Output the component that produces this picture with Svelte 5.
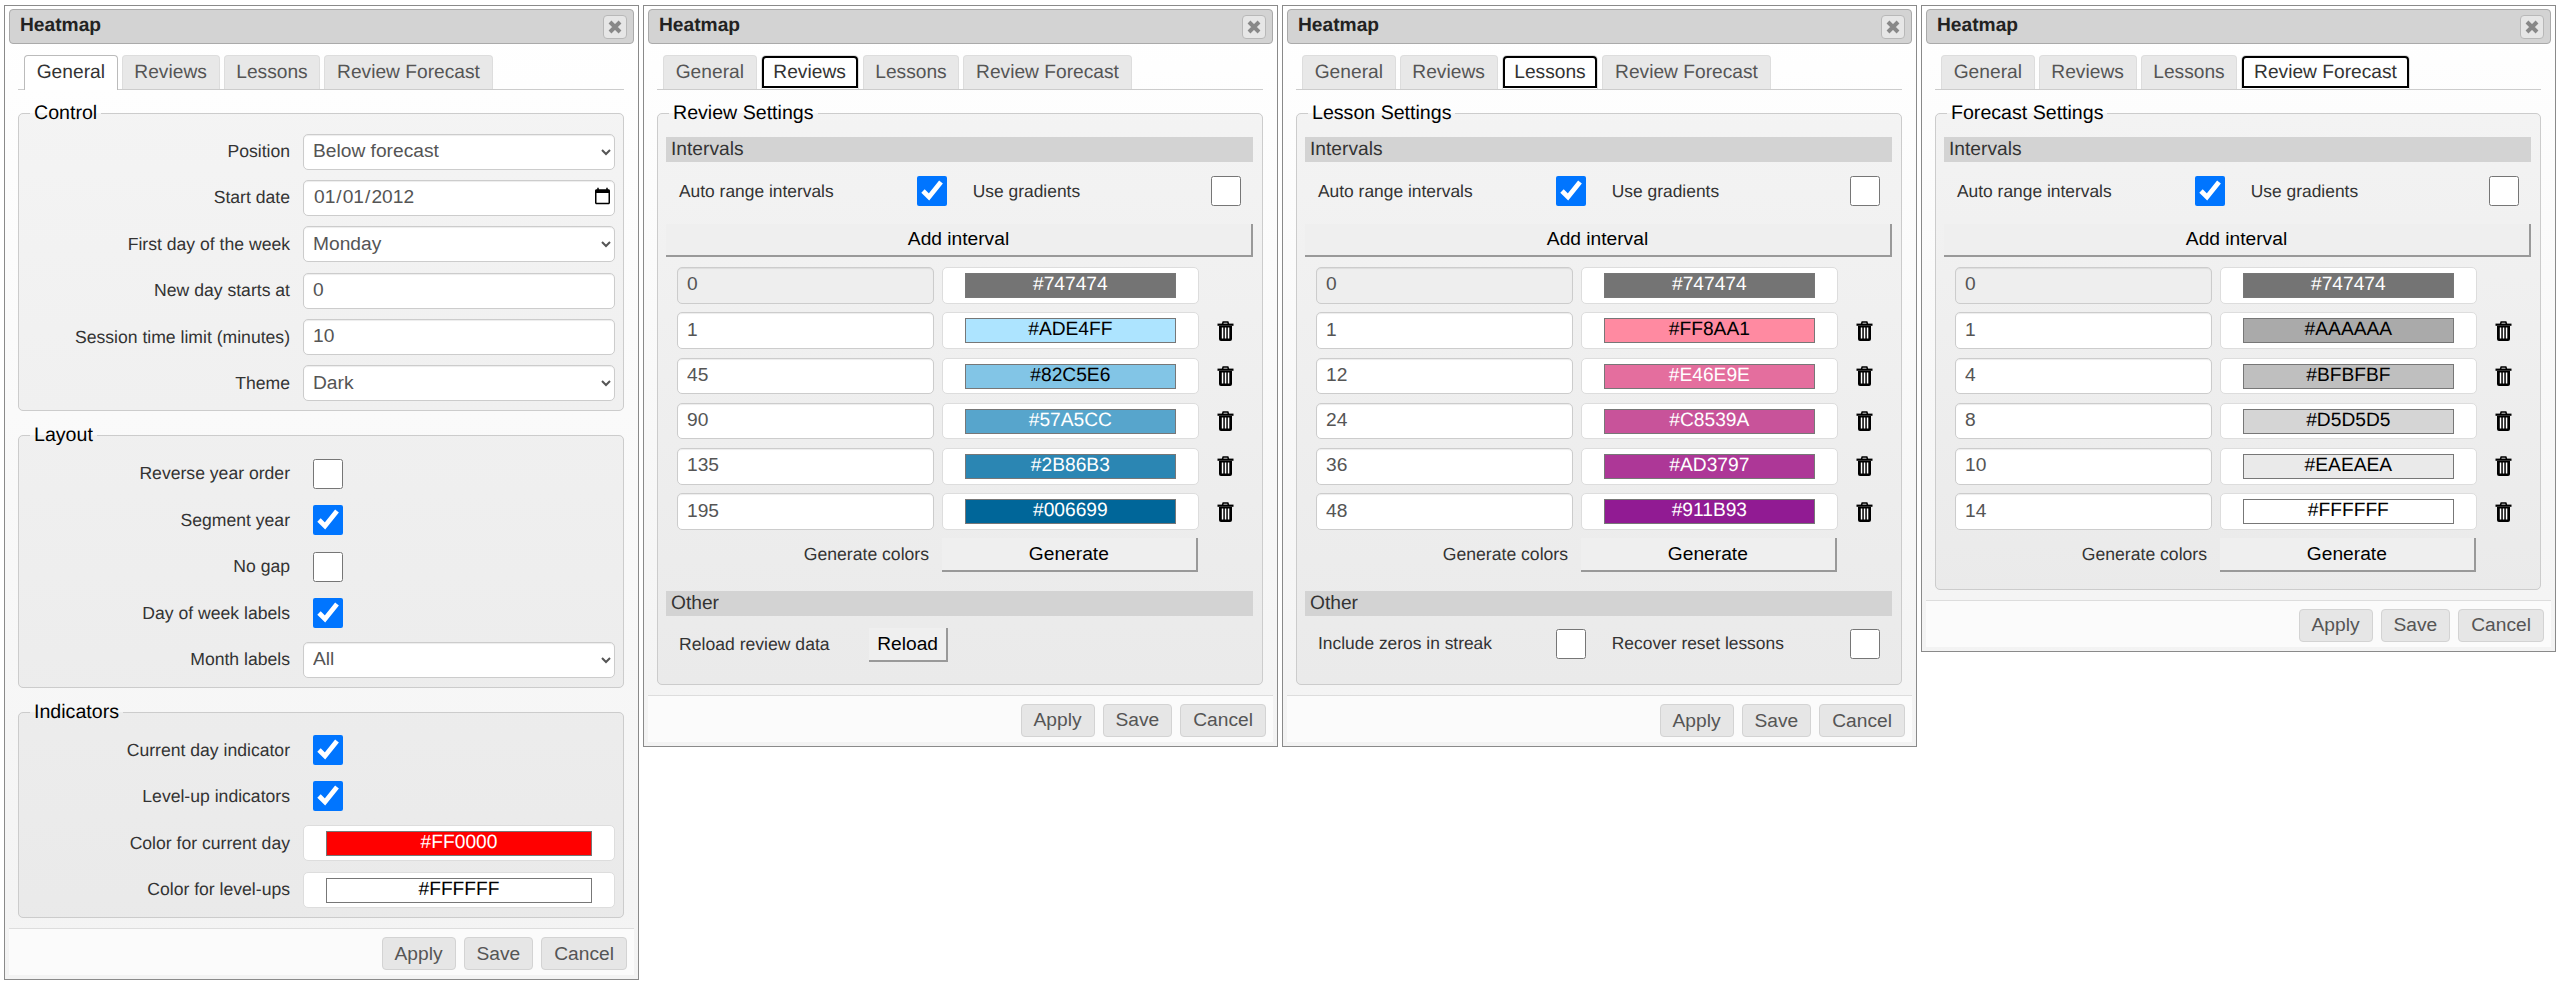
<script>
  // four copies of the settings dialog, one per tab
  const tabs = ['General', 'Reviews', 'Lessons', 'Review Forecast'];

  const panels = [
    {
      tab: 'Reviews',
      legend: 'Review Settings',
      intervals: [
        ['0', '#747474', true],
        ['1', '#ADE4FF', false],
        ['45', '#82C5E6', false],
        ['90', '#57A5CC', true],
        ['135', '#2B86B3', true],
        ['195', '#006699', true]
      ],
      other: 'reload'
    },
    {
      tab: 'Lessons',
      legend: 'Lesson Settings',
      intervals: [
        ['0', '#747474', true],
        ['1', '#FF8AA1', false],
        ['12', '#E46E9E', true],
        ['24', '#C8539A', true],
        ['36', '#AD3797', true],
        ['48', '#911B93', true]
      ],
      other: 'checks'
    },
    {
      tab: 'Review Forecast',
      legend: 'Forecast Settings',
      intervals: [
        ['0', '#747474', true],
        ['1', '#AAAAAA', false],
        ['4', '#BFBFBF', false],
        ['8', '#D5D5D5', false],
        ['10', '#EAEAEA', false],
        ['14', '#FFFFFF', false]
      ],
      other: null
    }
  ];
</script>

{#snippet trash()}
  <svg class="trash" viewBox="0 0 17 20" width="17" height="20">
    <path d="M5.5 3 L6.2 1 H10.8 L11.5 3" fill="none" stroke="#000" stroke-width="1.6"/>
    <rect x="0.5" y="2.6" width="16" height="2.2" fill="#000"/>
    <path d="M2 5 H15 V18 Q15 20 13 20 H4 Q2 20 2 18 Z" fill="#000"/>
    <rect x="4.8" y="6.5" width="1.5" height="11" fill="#fff"/>
    <rect x="7.8" y="6.5" width="1.5" height="11" fill="#fff"/>
    <rect x="10.8" y="6.5" width="1.5" height="11" fill="#fff"/>
  </svg>
{/snippet}

{#snippet header(current)}
  <div class="titlebar">
    <span>Heatmap</span>
    <button class="close" aria-label="Close">
      <svg viewBox="0 0 14 14" width="14" height="14">
        <path d="M2 2 L12 12 M12 2 L2 12" stroke="#888" stroke-width="4" fill="none"/>
      </svg>
    </button>
  </div>
  <div class="tabs">
    {#each tabs as t}
      <div class="tab" class:active={current === 'General' && t === 'General'} class:focus={current !== 'General' && t === current}>{t}</div>
    {/each}
  </div>
{/snippet}

{#snippet footer()}
  <div class="footer">
    <button>Apply</button>
    <button>Save</button>
    <button>Cancel</button>
  </div>
{/snippet}

{#snippet swatch(color, light)}
  <div class="swatchbox">
    <div class="swatch" class:light style="background: {color}">{color}</div>
  </div>
{/snippet}

<div class="page">
  <div class="window">
    {@render header('General')}
    <div class="content">
      <fieldset>
        <legend>Control</legend>
        <div class="form">
          <span class="lbl">Position</span>
          <select><option>Below forecast</option></select>
          <span class="lbl">Start date</span>
          <input type="date" value="2012-01-01" />
          <span class="lbl">First day of the week</span>
          <select><option>Monday</option></select>
          <span class="lbl">New day starts at</span>
          <input type="text" value="0" />
          <span class="lbl">Session time limit (minutes)</span>
          <input type="text" value="10" />
          <span class="lbl">Theme</span>
          <select><option>Dark</option></select>
        </div>
      </fieldset>
      <fieldset>
        <legend>Layout</legend>
        <div class="form">
          <span class="lbl">Reverse year order</span>
          <div class="chk"><input type="checkbox" /></div>
          <span class="lbl">Segment year</span>
          <div class="chk"><input type="checkbox" checked /></div>
          <span class="lbl">No gap</span>
          <div class="chk"><input type="checkbox" /></div>
          <span class="lbl">Day of week labels</span>
          <div class="chk"><input type="checkbox" checked /></div>
          <span class="lbl">Month labels</span>
          <select><option>All</option></select>
        </div>
      </fieldset>
      <fieldset>
        <legend>Indicators</legend>
        <div class="form">
          <span class="lbl">Current day indicator</span>
          <div class="chk"><input type="checkbox" checked /></div>
          <span class="lbl">Level-up indicators</span>
          <div class="chk"><input type="checkbox" checked /></div>
          <span class="lbl">Color for current day</span>
          {@render swatch('#FF0000', true)}
          <span class="lbl">Color for level-ups</span>
          {@render swatch('#FFFFFF', false)}
        </div>
      </fieldset>
    </div>
    {@render footer()}
  </div>

  {#each panels as p}
    <div class="window">
      {@render header(p.tab)}
      <div class="content">
        <fieldset class="settings">
          <legend>{p.legend}</legend>
          <div class="section first">Intervals</div>
          <div class="pairs">
            <label class="pair">Auto range intervals <input type="checkbox" checked /></label>
            <label class="pair">Use gradients <input type="checkbox" /></label>
          </div>
          <button class="raised add">Add interval</button>
          <div class="rows">
            {#each p.intervals as iv, i}
              <input type="text" value={iv[0]} disabled={i === 0} />
              {@render swatch(iv[1], iv[2])}
              <div class="del">
                {#if i > 0}{@render trash()}{/if}
              </div>
            {/each}
            <span class="lbl gen">Generate colors</span>
            <button class="raised generate">Generate</button>
          </div>
          {#if p.other}
            <div class="section">Other</div>
          {/if}
          {#if p.other === 'reload'}
            <div class="reload">
              <span class="lbl">Reload review data</span>
              <button class="raised">Reload</button>
            </div>
          {:else if p.other === 'checks'}
            <div class="pairs last">
              <label class="pair">Include zeros in streak <input type="checkbox" /></label>
              <label class="pair">Recover reset lessons <input type="checkbox" /></label>
            </div>
          {/if}
        </fieldset>
      </div>
      {@render footer()}
    </div>
  {/each}
</div>

<style>
  :global(body) {
    background: #fff;
    font-family: "Liberation Sans", Arial, sans-serif;
    text-rendering: geometricPrecision;
  }

  .page {
    display: flex;
    align-items: flex-start;
    gap: 4px;
    padding: 5px 0 0 4px;
  }

  .window {
    width: 635px;
    flex: none;
    box-sizing: border-box;
    border: 1px solid #8a8a8a;
    padding: 3px 4px 4px 4px;
    background: linear-gradient(#fff, #f3f3f3);
  }

  .titlebar {
    display: flex;
    align-items: center;
    justify-content: space-between;
    height: 35px;
    box-sizing: border-box;
    padding: 0 6px 2px 10px;
    background: #d3d3d3;
    border: 1px solid #aaa;
    border-radius: 4px;
    font-size: 19.2px;
    font-weight: bold;
    color: #222;
  }

  .close {
    width: 24px;
    height: 24px;
    padding: 0;
    margin-top: 2px;
    display: flex;
    align-items: center;
    justify-content: center;
    background: #e6e6e6;
    border: 1px solid #b8b8b8;
    border-radius: 4px;
  }

  .tabs {
    display: flex;
    gap: 4px;
    margin: 11px 10px 0 9px;
    padding-left: 6px;
    border-bottom: 1px solid #ccc;
    height: 34px;
  }

  .tab {
    box-sizing: border-box;
    height: 34px;
    padding: 5.5px 11.7px 0;
    background: #e8e8e8;
    border: 1px solid #ddd;
    border-bottom: none;
    border-radius: 4px 4px 0 0;
    font-size: 19.2px;
    color: #555;
  }

  .tab.active {
    height: 35px;
    background: #fff;
    border-color: #bbb;
    color: #333;
  }

  .tab.focus {
    background: #fff;
    color: #333;
    outline: 2px solid #000;
    outline-offset: -3px;
    border-radius: 5px 5px 0 0;
  }

  .content {
    padding: 0 10px 0 9px;
    display: flex;
    flex-direction: column;
    gap: 13px;
    margin-top: 12px;
  }

  fieldset {
    margin: 0;
    padding: 8.5px 9px 9px 8px;
    border: 1px solid #ccc;
    border-radius: 5px;
    background: rgba(0, 0, 0, 0.04);
    min-width: 0;
  }

  legend {
    margin-left: 3px;
    padding: 0 4px;
    font-size: 19.6px;
    color: #000;
  }

  .form {
    display: grid;
    grid-template-columns: 264px 312px;
    column-gap: 13px;
    row-gap: 10.4px;
    margin-left: -1px;
  }

  .lbl {
    font-size: 17.6px;
    color: #333;
    text-align: right;
    align-self: center;
  }

  select,
  input[type="text"],
  input[type="date"] {
    box-sizing: border-box;
    width: 100%;
    height: 36px;
    padding: 0 0 2px 9px;
    font-family: inherit;
    font-size: 19.2px;
    color: #555;
    background: #fff;
    border: 1px solid #ccc;
    border-radius: 5px;
    box-shadow: inset 0 1px 1px rgba(0, 0, 0, 0.075);
  }

  select {
    padding-left: 5px;
  }

  input:disabled {
    background: #eee;
    opacity: 1;
  }

  input[type="checkbox"] {
    width: 30px;
    height: 30px;
    margin: 0;
    accent-color: #0075ff;
  }

  .chk {
    height: 36px;
    display: flex;
    align-items: center;
    padding-left: 9.5px;
  }

  .swatchbox {
    box-sizing: border-box;
    height: 36.5px;
    padding: 5px 22px;
    background: #fff;
    border: 1px solid #ddd;
    border-radius: 5px;
  }

  .swatch {
    box-sizing: border-box;
    height: 25px;
    line-height: 21px;
    text-align: center;
    font-size: 19.2px;
    color: #000;
    border: 1px solid #777;
  }

  .swatch.light {
    color: #fff;
  }

  .section {
    height: 25px;
    line-height: 26px;
    margin-top: 19px;
    padding-left: 5px;
    background: #d3d3d3;
    font-size: 19.2px;
    color: #333;
  }

  .section.first {
    margin-top: 3.5px;
  }

  .pairs {
    display: flex;
    gap: 25.6px;
    margin: 14px 12px 17.5px 13px;
  }

  .pairs.last {
    margin-top: 13px;
    margin-bottom: 16.5px;
  }

  .pair {
    flex: 1;
    display: flex;
    align-items: center;
    justify-content: space-between;
    font-size: 17.4px;
    color: #333;
  }

  .raised {
    font-family: inherit;
    font-size: 19.2px;
    color: #000;
    padding: 0 8px;
    height: 34px;
    background: #efefef;
    border: none;
    border-right: 2px solid #999;
    border-bottom: 2px solid #999;
  }

  .add {
    display: block;
    width: 100%;
    height: 33px;
  }

  .rows {
    display: grid;
    grid-template-columns: 257px 257.5px 1fr;
    column-gap: 7.6px;
    row-gap: 8.8px;
    margin: 10.5px 0 8px 11px;
  }

  .rows input {
    height: 36.5px;
  }

  .del {
    display: flex;
    align-items: center;
    padding-left: 10px;
  }

  .gen {
    grid-column: 1;
    margin-right: 5px;
    margin-top: -1px;
  }

  .generate {
    grid-column: 2;
    margin-top: -1px;
    margin-right: 1px;
  }

  .reload {
    display: flex;
    align-items: center;
    justify-content: space-between;
    width: 269px;
    margin: 12px 0 13px 13px;
  }

  .footer {
    display: flex;
    justify-content: flex-end;
    gap: 8px;
    margin-top: 10px;
    padding: 8px 7px 5px 0;
    background: #fbfbfb;
    border-top: 1px solid #ddd;
  }

  .footer button {
    box-sizing: border-box;
    height: 33px;
    padding: 0 12px;
    font-family: inherit;
    font-size: 19.2px;
    color: #555;
    background: #e6e6e6;
    border: 1px solid #d3d3d3;
    border-radius: 4px;
  }
</style>
